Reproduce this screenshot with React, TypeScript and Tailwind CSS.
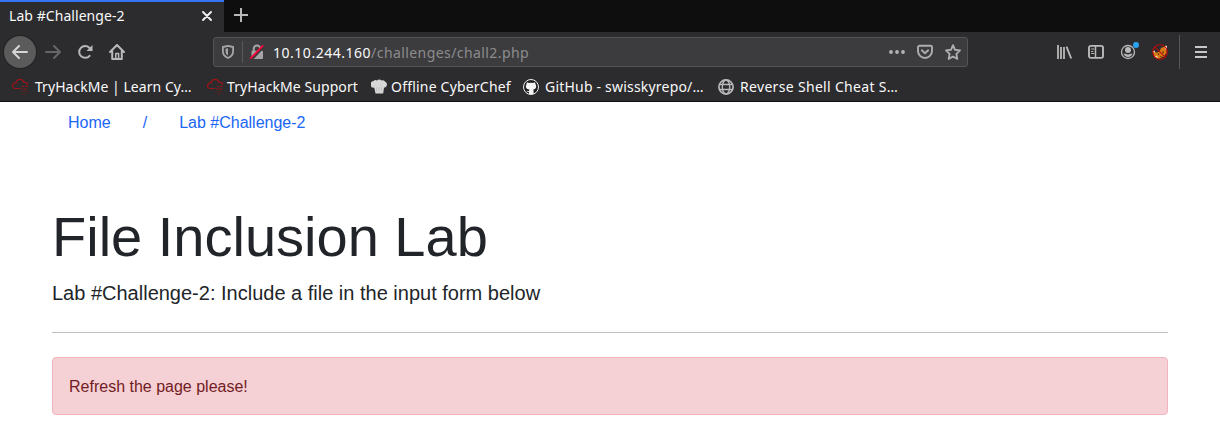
import React from "react";

const ThmCloud = () => (
  <svg width="17" height="17" viewBox="0 0 17 17" fill="none" className="shrink-0">
    <path d="M8 10.500H3A2.500 2.500 0 0 1 1.800 5.800C2.300 4.700 3.300 4.800 4.200 5 4.500 2.500 6 1.300 8 1.300c2 0 3.200 1 3.600 2.900C14 4 15.300 5 15.600 7" stroke="#a01316" strokeWidth="1.200" />
    <path d="M10 8.500h2M13.200 8.500h2.500M9 11h1.500M11.800 11h3" stroke="#a01316" strokeWidth="1.100" />
    <path d="M8.500 14h1.500M11.200 13.500h1.600M14 13.500h1.800M11 16h2" stroke="#6d1a1d" strokeWidth="1.100" />
  </svg>
);

const ChefHat = () => (
  <svg width="16" height="16" viewBox="0 0 16 16" className="shrink-0">
    <path d="M3.300 8.800A3.400 3.400 0 0 1 2.500 2 3 3 0 0 1 6 1.400a3.600 3.600 0 0 1 4.600 0A3.200 3.200 0 0 1 14 2.500a3.300 3.300 0 0 1-1 6.300L12.200 14.500H4.500Z" fill="#d6d6d6" />
    <path d="M5.500 8v4.500M8 8v4.500M10.500 8v4.500" stroke="#bdbdbd" strokeWidth=".8" />
  </svg>
);

const Octocat = () => (
  <svg width="16" height="16" viewBox="0 0 16 16" className="shrink-0">
    <circle cx="8" cy="8" r="7.500" fill="#202023" stroke="#eee" strokeWidth="1" />
    <path d="M4 3.200 6 4.100a8 8 0 0 1 4 0l2-.9.5 2.100c.7.9.8 2 .5 3.100-.4 1.300-1.500 1.900-2.800 2.100.3.4.4.9.4 1.500v3H6v-2c-1.300.3-2-.2-2.500-1.200 1 .4 1.600.6 2.500.2 0-.6.1-1.100.4-1.500C4.700 10.200 3.500 9.700 3 8.400c-.3-1.100-.2-2.200.5-3.100Z" fill="#f5f5f5" />
  </svg>
);

const Globe = () => (
  <svg width="16" height="16" viewBox="0 0 16 16" fill="none" stroke="#b9b9ba" strokeWidth="1.400" className="shrink-0">
    <circle cx="8" cy="8" r="7.100" strokeWidth="1.700" />
    <ellipse cx="8" cy="8" rx="3.700" ry="7" />
    <path d="M1.500 5.500h13M1.500 10.500h13" />
  </svg>
);

const Back = ({ color }: { color: string }) => (
  <svg width="18" height="18" viewBox="0 0 18 18" fill="none" stroke={color} strokeWidth="2" strokeLinecap="round" strokeLinejoin="round">
    <path d="M16 9H2M8 3 2 9l6 6" />
  </svg>
);

const Forward = () => (
  <svg width="18" height="18" viewBox="0 0 18 18" fill="none" stroke="#66666a" strokeWidth="2" strokeLinecap="round" strokeLinejoin="round">
    <path d="M2 9h14M10 3l6 6-6 6" />
  </svg>
);

const Reload = () => (
  <svg width="16" height="16" viewBox="0 0 16 16" fill="none">
    <path d="M12.600 11.800A5.900 5.900 0 1 1 12.300 3.800" stroke="#b9b9ba" strokeWidth="2" strokeLinecap="round" />
    <path d="M15.500 1v6h-6Z" fill="#b9b9ba" />
  </svg>
);

const HomeIcon = () => (
  <svg width="16" height="16" viewBox="0 0 16 16" fill="none" stroke="#b9b9ba" strokeWidth="2" strokeLinejoin="round" strokeLinecap="round">
    <path d="M1 8l7-7 7 7M3.200 7v8h9.600V7" />
    <path d="M6.800 14v-4.500h2.800V14" strokeWidth="1.500" />
  </svg>
);

const Shield = () => (
  <svg width="14" height="16" viewBox="0 0 14 16">
    <path d="M7 1.900 12.100 3v4c0 3.500-2 5.800-5.100 7C3.900 12.800 1.900 10.500 1.900 7V3Z" fill="none" stroke="#a5a5a7" strokeWidth="1.800" strokeLinejoin="round" />
    <path d="M7 4.200 4.500 4.800V7c0 2 .8 3.500 2.500 4.500Z" fill="#a5a5a7" />
  </svg>
);

const LockOff = () => (
  <svg width="16" height="16" viewBox="0 0 16 16">
    <path d="M4.700 7V4.800a3.300 3.300 0 0 1 6.600 0V7" fill="none" stroke="#a5a5a7" strokeWidth="2" />
    <rect x="2.500" y="6.800" width="11.500" height="8.200" rx="1" fill="#a5a5a7" />
    <path d="M2.200 15.800 15 2.200" stroke="#38383a" strokeWidth="2.500" />
    <path d="M1.300 14.700 14.200 1.300" stroke="#f5073d" strokeWidth="1.900" />
  </svg>
);

const Dots = () => (
  <svg width="16" height="16" viewBox="0 0 16 16" fill="#b3b3b5">
    <circle cx="2" cy="8" r="1.900" /><circle cx="8" cy="8" r="1.900" /><circle cx="14" cy="8" r="1.900" />
  </svg>
);

const Pocket = () => (
  <svg width="16" height="16" viewBox="0 0 16 16" fill="none" stroke="#adadaf" strokeWidth="1.900" strokeLinecap="round" strokeLinejoin="round">
    <path d="M2.500 1.800h11c.8 0 1.500.5 1.500 1.300V7A7 7 0 0 1 1 7V3.100c0-.8.700-1.300 1.500-1.300Z" />
    <path d="m4.800 6.300 3.200 3 3.200-3" />
  </svg>
);

const Star = () => (
  <svg width="16" height="16" viewBox="0 0 16 16" fill="none" stroke="#adadaf" strokeWidth="1.900" strokeLinejoin="round">
    <path d="m8 1.200 2 4.600 5 .6-3.600 3.500.9 5L8 12.500l-4.300 2.400.9-5L1 6.400l5-.6Z" />
  </svg>
);

const Library = () => (
  <svg width="16" height="16" viewBox="0 0 16 16" fill="none" stroke="#b9b9ba" strokeWidth="1.800">
    <path d="M2 1v14M5 3v12M8 3v12M10.500 2.700 15.200 14.500" />
  </svg>
);

const Sidebar = () => (
  <svg width="16" height="16" viewBox="0 0 16 16" fill="none" stroke="#b9b9ba">
    <rect x="1" y="1.900" width="14" height="12" rx="1.800" strokeWidth="1.900" />
    <path d="M7.500 2v12" strokeWidth="1.500" />
    <path d="M3.200 5h3M3.200 7.500h2M3.200 9.500h3" />
  </svg>
);

const Account = () => (
  <svg width="20" height="20" viewBox="0 0 20 20">
    <circle cx="8" cy="11" r="6.500" fill="none" stroke="#b9b9ba" strokeWidth="1.300" />
    <circle cx="8" cy="9" r="3" fill="#b9b9ba" />
    <path d="M3.400 12.300c1 .8 1.400.5 2.300.4 1.200 1 3.400 1 4.600 0 .9.100 1.300.4 2.300-.4-.7 2.400-2.300 3.700-4.600 3.700s-3.900-1.300-4.600-3.700Z" fill="#b9b9ba" />
    <circle cx="16" cy="4" r="3" fill="#2aa2f5" />
  </svg>
);

const FoxyProxy = () => (
  <svg width="16" height="16" viewBox="0 0 16 16">
    <path d="m1 8 1.500-.5 2 1.200 3-1.200 1.500-3.500 3-1.200L14.500 1.500l.3 3.500-.3 4-2.800 3.500-5 2.500-4.200-1.200Z" fill="#d97912" />
    <path d="m.8 7 2.400-.2-1 2.200ZM13 1.700l2 .3-.4 3-1.300.5ZM3 12.500l1.600-1 1.700 3Z" fill="#f1e8e2" />
    <path d="m6 10 1.200.5M10.500 8l1.200.3M8.500 12.500l1 .3" stroke="#32211a" strokeWidth="1.300" />
    <circle cx="8" cy="8" r="7.300" fill="none" stroke="#b90c0c" strokeWidth="1.100" />
    <path d="m2.800 2.800 10.400 10.400" stroke="#b90c0c" strokeWidth="1.100" />
  </svg>
);

const bookmarks = [
  { icon: <ThmCloud />, label: "TryHackMe | Learn Cy…", box: "w-[195px] gap-[6px]", text: "tracking-[0.04px]" },
  { icon: <ThmCloud />, label: "TryHackMe Support", box: "w-[164px] gap-[3px]", text: "tracking-[0.08px]" },
  { icon: <ChefHat />, label: "Offline CyberChef", box: "w-[152px] gap-[4px]", text: "tracking-[0.2px]" },
  { icon: <Octocat />, label: "GitHub - swisskyrepo/…", box: "w-[195px] gap-[6px]", text: "tracking-[0.2px]" },
  { icon: <Globe />, label: "Reverse Shell Cheat S…", box: "w-[195px] gap-[6px]", text: "tracking-[0.32px]" },
];

function TabStrip() {
  return (
    <div className="flex h-8 bg-[#0e0e0f]">
      <div className="flex w-[224px] items-center justify-between border-t-2 border-[#3574f0] bg-[#2c2c2e] pl-[9px] pr-3 text-[#f9f9fa]">
        <span className="pb-[2px] text-[14px] leading-5 tracking-[0.06px]">Lab #Challenge-2</span>
        <svg width="10" height="10" viewBox="0 0 10 10" stroke="#f0f0f1" strokeWidth="1.900" strokeLinecap="round" className="mb-[2px]"><path d="m1 1 8 8M9 1 1 9" /></svg>
      </div>
      <svg className="ml-[10px] mt-2" width="14" height="14" viewBox="0 0 14 14" stroke="#b9b9ba" strokeWidth="2"><path d="M7 0v14M0 7h14" /></svg>
    </div>
  );
}

function Toolbar() {
  return (
    <div className="flex h-10 items-center bg-[#2c2c2e] pl-1 pr-[13px]">
      <div className="flex size-8 items-center justify-center rounded-full bg-[#5b5b5c] shadow-[0_0_0_1px_#222223]"><Back color="#d6d6d7" /></div>
      <div className="ml-2"><Forward /></div>
      <div className="ml-[15px]"><Reload /></div>
      <div className="ml-4"><HomeIcon /></div>
      <div className="ml-[88px] flex h-[30px] w-[755px] shrink-0 items-center rounded-[3px] border border-[#545456] bg-[#3c3c3e] pl-[7px] pr-[6px]">
        <Shield />
        <div className="ml-[7px] h-[22px] w-px bg-[#58595f]" />
        <div className="ml-[6px]"><LockOff /></div>
        <div className="ml-2 flex-1 pt-[2px] text-[14px] leading-5 text-[#8c8c8f]"><span className="tracking-[0.52px] text-[#f9f9fa]">10.10.244.160</span><span className="tracking-[0.42px]">/challenges/chall2.php</span></div>
        <div className="flex gap-3"><Dots /><Pocket /><Star /></div>
      </div>
      <div className="ml-[88px] flex items-center"><Library /></div>
      <div className="ml-4"><Sidebar /></div>
      <div className="-mt-[2px] ml-4"><Account /></div>
      <div className="ml-3"><FoxyProxy /></div>
      <div className="ml-[11px] h-[34px] w-px bg-[#57575a]" />
      <svg className="ml-[15px]" width="12" height="14" viewBox="0 0 12 14" stroke="#c8c8c9" strokeWidth="2"><path d="M0 2h12M0 7h12M0 12h12" /></svg>
    </div>
  );
}

export default function App() {
  return (
    <div className="h-[436px] overflow-hidden bg-white font-['Liberation_Sans',Arial,sans-serif]">
      <header className="h-[102px] border-b border-[#0d0d0e] bg-[#2c2c2e] font-['Noto_Sans',sans-serif]">
        <TabStrip />
        <Toolbar />
        <div className="flex h-[29px] items-center pl-3 text-[14px] leading-5 text-[#f9f9fa]">
          {bookmarks.map((b) => (
            <div key={b.label} className={`flex shrink-0 items-center whitespace-nowrap ${b.box}`}>
              {b.icon}
              <span className={b.text}>{b.label}</span>
            </div>
          ))}
        </div>
      </header>
      <main className="px-[52px] text-[#212529]">
        <nav className="flex h-[42px] items-center gap-8 px-4 text-[16px] leading-6 text-[#1a66f5]">
          <a>Home</a><a>/</a><a>Lab #Challenge-2</a>
        </nav>
        <h1 className="mt-[59px] text-[56px] leading-[67px] font-light">File Inclusion Lab</h1>
        <p className="mt-2 text-[20px] leading-[30px]">Lab #Challenge-2: Include a file in the input form below</p>
        <hr className="mt-6 border-[#bcbdbe]" />
        <div className="mt-6 h-[58px] rounded-[4px] border border-[#f1b5bf] bg-[#f5d0d4] px-4 pt-[17px] text-[16px] leading-6 text-[#721c24]">Refresh the page please!</div>
      </main>
    </div>
  );
}
